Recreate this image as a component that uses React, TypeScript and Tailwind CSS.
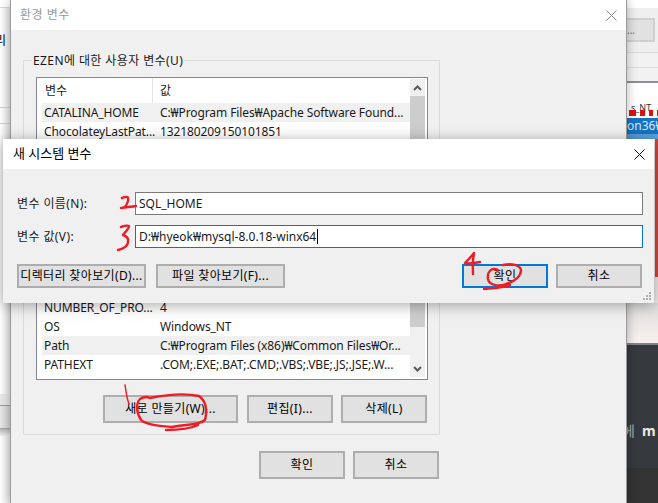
const btn = 'flex items-center justify-center bg-[#e1e1e1] border-2 border-[#adadad] text-[12px] tracking-[0.35px] text-black';

const topRows = [
  { name: 'CATALINA_HOME', value: 'C:₩Program Files₩Apache Software Found...', hi: true },
  { name: 'ChocolateyLastPat...', value: '132180209150101851', hi: false },
];

const bottomRows = [
  { name: 'NUMBER_OF_PRO...', value: '4', hi: false },
  { name: 'OS', value: 'Windows_NT', hi: false },
  { name: 'Path', value: 'C:₩Program Files (x86)₩Common Files₩Or...', hi: true },
  { name: 'PATHEXT', value: '.COM;.EXE;.BAT;.CMD;.VBS;.VBE;.JS;.JSE;.W...', hi: false },
];

const Row = ({ name, value, hi }: { name: string; value: string; hi: boolean }) => (
  <div className={`flex h-[19px] items-center whitespace-nowrap text-[12px] tracking-[-0.1px] text-[#1a1a1a] ${hi ? 'bg-[#f0f0f0]' : ''}`}>
    <span className="w-[118px] pl-[2px]">{name}</span>
    <span>{value}</span>
  </div>
);

const CloseIcon = ({ color }: { color: string }) => (
  <svg width="11" height="11" viewBox="0 0 11 11" stroke={color} strokeWidth="1" fill="none">
    <path d="M0.5 0.5L10.5 10.5M10.5 0.5L0.5 10.5" />
  </svg>
);

const Chevron = ({ down }: { down?: boolean }) => (
  <svg width="9" height="6" viewBox="0 0 9 6" fill="none" stroke="#5a5a5a" strokeWidth="2">
    <path d={down ? 'M1 1L4.5 4.5L8 1' : 'M1 5L4.5 1.5L8 5'} />
  </svg>
);

const BackdropLeft = () => (
  <div className="absolute left-0 top-0 flex h-[503px] w-[11px] flex-col bg-white text-[12px] leading-none text-black">
    <div className="h-[8px] border-b border-[#d8d8d8] bg-white" />
    <div className="flex h-[100px] items-start overflow-hidden border-b border-[#d0d0d0] bg-gradient-to-r from-white to-[#e4e4e4] pt-[27px]">
      <span className="ml-[-5px]">리</span>
    </div>
    <div className="h-[16px] border-b border-[#d0d0d0] bg-gradient-to-r from-white to-[#e4e4e4]" />
    <div className="h-[270px] bg-gradient-to-r from-white to-[#e4e4e4]" />
    <div className="h-[12px] border-b border-[#9a9a9a] bg-[#e6e6e6]" />
    <div className="h-[23px] border-b border-[#a5a5a5] bg-gradient-to-r from-[#e6e6e6] to-[#d0d0d0]" />
    <div className="h-[7px] bg-gradient-to-b from-[#b8b8b8] to-[#f0f0f0]" />
    <div className="flex-1 bg-gradient-to-r from-white to-[#e4e4e4]" />
  </div>
);

const BackdropRight = () => (
  <div className="absolute left-[627px] top-0 flex h-[503px] w-[31px] flex-col bg-white text-black">
    <div className="h-[8px] shrink-0 bg-white" />
    <div className="flex h-[44px] shrink-0 items-center bg-[#efefef]">
      <div className="flex h-[24px] w-[28px] items-center border-2 border-l-0 border-[#cfcfcf] bg-[#e1e1e1] text-[10px] text-[#666]">...</div>
    </div>
    <div className="h-[15px] shrink-0 border-t border-[#dcdcdc] bg-[#f2f2f2]" />
    <div className="h-[14px] shrink-0 border-t border-[#dcdcdc] bg-[#f2f2f2]" />
    <div className="h-[22px] shrink-0 border-t-2 border-[#8c9094] bg-white" />
    <div className="relative flex h-[15px] shrink-0 gap-[4px] bg-white pl-[2px] pt-[7px]">
      <span className="absolute left-[4px] top-[-1px] text-[9px] leading-[12px] text-[#333]">s_NT</span>
      <div className="relative h-[6px] w-[7px] shrink-0 bg-[#e01010]" />
      <div className="relative h-[6px] w-[5px] shrink-0 bg-[#e01010]" />
      <div className="relative h-[6px] w-[4px] shrink-0 bg-[#e01010]" />
      <div className="relative h-[6px] w-[3px] shrink-0 bg-[#e01010]" />
    </div>
    <div className="flex h-[16px] shrink-0 items-center overflow-hidden bg-[#1673c4] text-[12px] text-[#d8ecff]">on36₩</div>
    <div className="h-[5px] shrink-0 bg-[#5a9fdc]" />
    <div className="flex h-[164px] shrink-0 justify-end bg-[#f0ebe8]">
      <div className="h-[138px] w-[3px] shrink-0 bg-[#d0483c]" />
    </div>
    <div className="h-[42px] shrink-0 border-b-2 border-[#7d8489] bg-gradient-to-b from-[#dedede] to-[#f8f0ee]" />
    <div className="flex h-[123px] shrink-0 items-start overflow-hidden whitespace-nowrap bg-[#363a3e] pt-[75px] text-[14px] font-bold text-[#e8e8e8]">
      <span className="ml-[-5px] shrink-0 font-normal text-[#aaa]">에</span>
      <span className="ml-[7px] shrink-0">m</span>
    </div>
    <div className="flex-1 bg-[#333333]" />
  </div>
);

const BackWindow = () => (
  <div className="absolute left-[10px] top-0 flex h-[503px] w-[617px] flex-col border-x border-[#9a9a9a] bg-[#f0f0f0] shadow-[0_0_10px_rgba(0,0,0,0.3)]">
    <div className="flex h-[30px] items-center justify-between bg-white pl-[9px] pr-[9px] text-[12px] tracking-[0.5px] text-[#999]">
      <span>환경 변수</span>
      <CloseIcon color="#8a8a8a" />
    </div>
    <div className="relative ml-[12px] mt-[30px] h-[375px] w-[417px] border border-[#dcdcdc] px-[12px] pt-[16px]">
      <span className="absolute left-[8px] top-[-9px] bg-[#f0f0f0] px-[1px] text-[12px] leading-[18px] tracking-[0.4px] text-[#1a1a1a]">EZEN에 대한 사용자 변수(U)</span>
      <div className="flex h-[303px] w-[392px] border border-[#828790] bg-white">
        <div className="flex min-w-0 flex-1 flex-col overflow-hidden">
          <div className="flex h-[25px] shrink-0 items-center text-[12px] text-[#1a1a1a]">
            <span className="flex h-full w-[116px] items-center border-r border-[#e5e5e5] pl-[8px]">변수</span>
            <span className="pl-[7px]">값</span>
          </div>
          <div className="ml-[5px] flex flex-1 flex-col">
            {topRows.map((r) => <Row key={r.name} {...r} />)}
            <div className="flex-1" />
            {bottomRows.map((r) => <Row key={r.name} {...r} />)}
            <div className="h-[5px]" />
          </div>
        </div>
        <div className="mr-[2px] mt-[1px] flex h-[298px] w-[15px] flex-col items-center bg-[#f0f0f0]">
          <div className="flex h-[17px] shrink-0 items-center justify-center"><Chevron /></div>
          <div className="h-[231px] w-full bg-[#cdcdcd]" />
          <div className="flex-1" />
          <div className="flex h-[17px] shrink-0 items-center justify-center"><Chevron down /></div>
        </div>
      </div>
      <div className="ml-[67px] mt-[15px] flex">
        <div className={`${btn} h-[28px] w-[135px]`}>새로 만들기(W)...</div>
        <div className={`${btn} ml-[9px] h-[28px] w-[86px]`}>편집(I)...</div>
        <div className={`${btn} ml-[8px] h-[28px] w-[86px]`}>삭제(L)</div>
      </div>
    </div>
    <div className="ml-[248px] mt-[16px] flex gap-[8px]">
      <div className={`${btn} h-[28px] w-[86px]`}>확인</div>
      <div className={`${btn} h-[28px] w-[86px]`}>취소</div>
    </div>
  </div>
);

const NewVarDialog = () => (
  <div className="absolute left-[3px] top-[139px] flex h-[164px] w-[651px] flex-col bg-[#f0f0f0] shadow-[0_2px_14px_rgba(0,0,0,0.35)]">
    <div className="flex h-[30px] items-center justify-between bg-white pl-[10px] pr-[9px] text-[13px] text-black">
      <span>새 시스템 변수</span>
      <CloseIcon color="#111" />
    </div>
    <div className="flex flex-col pl-[14px] pr-[8px] pt-[23px]">
      <div className="flex h-[23px] items-center text-[12px] text-[#1a1a1a]">
        <span className="w-[118px] shrink-0 tracking-[0.4px]">변수 이름(N):</span>
        <div className="flex h-[23px] w-[508px] items-center border border-[#7a7a7a] bg-white pl-[3px]">SQL_HOME</div>
      </div>
      <div className="mt-[10px] flex h-[23px] items-center text-[12px] text-[#1a1a1a]">
        <span className="w-[118px] shrink-0 tracking-[0.4px]">변수 값(V):</span>
        <div className="flex h-[23px] w-[508px] items-center border border-[#0078d7] bg-white pl-[3px]">
          D:₩hyeok₩mysql-8.0.18-winx64<span className="ml-[1px] h-[15px] w-px bg-black" />
        </div>
      </div>
      <div className="mt-[16px] flex">
        <div className={`${btn} h-[24px] w-[129px] shrink-0`}>디렉터리 찾아보기(D)...</div>
        <div className={`${btn} ml-[10px] h-[24px] w-[129px] shrink-0`}>파일 찾아보기(F)...</div>
        <div className={`${btn} ml-[177px] h-[24px] w-[86px] shrink-0 !border-[#0078d7]`}>확인</div>
        <div className={`${btn} ml-[8px] h-[24px] w-[86px] shrink-0`}>취소</div>
      </div>
    </div>
    {/* resize grip */}
    <svg className="absolute bottom-[2px] right-[2px]" width="9" height="9" viewBox="0 0 9 9" fill="#b0b0b0">
      <rect x="6" y="0" width="2" height="2" />
      <rect x="3" y="3" width="2" height="2" />
      <rect x="6" y="3" width="2" height="2" />
      <rect x="0" y="6" width="2" height="2" />
      <rect x="3" y="6" width="2" height="2" />
      <rect x="6" y="6" width="2" height="2" />
    </svg>
  </div>
);

// hand-drawn red marks on top of the screenshot
const Scribbles = () => (
  <svg className="absolute left-0 top-0" width="658" height="503" viewBox="0 0 658 503" fill="none" stroke="#ee1c25" strokeWidth="2.4" strokeLinecap="round" strokeLinejoin="round">
    <path d="M122 198C125 197 128 196 128 198C129 201 127 204 125 207M121 208C126 207 131 207 136 206" />
    <path d="M121 227C124 226 127 225 129 226C129 229 125 232 123 235C126 236 129 238 128 242C128 246 123 249 118 250" />
    <path d="M474 253C471 257 468 260 465 263C470 264 475 263 480 262M474 254C472 261 473 268 473 274" />
    <path d="M498 270C491 267 487 272 488 279C489 285 498 287 506 284C515 281 521 276 521 270C520 265 512 263 503 265M510 285C503 288 497 288 484 289" />
    <path d="M125 385C126 392 127 399 129 404" strokeWidth="1.5" />
    <path d="M150 398C165 395 185 393 199 396C207 402 207 412 205 420C198 426 185 424 172 427C160 426 146 425 141 420C136 412 136 403 140 399C145 396 148 397 150 398M198 425C190 429 180 430 166 430" />
  </svg>
);

export default function App() {
  return (
    <div
      className="relative h-[503px] w-[658px] overflow-hidden bg-white"
      style={{ fontFamily: '"Noto Sans", "Noto Sans CJK KR", sans-serif' }}
    >
      <BackdropLeft />
      <BackdropRight />
      <BackWindow />
      <NewVarDialog />
      <Scribbles />
    </div>
  );
}
